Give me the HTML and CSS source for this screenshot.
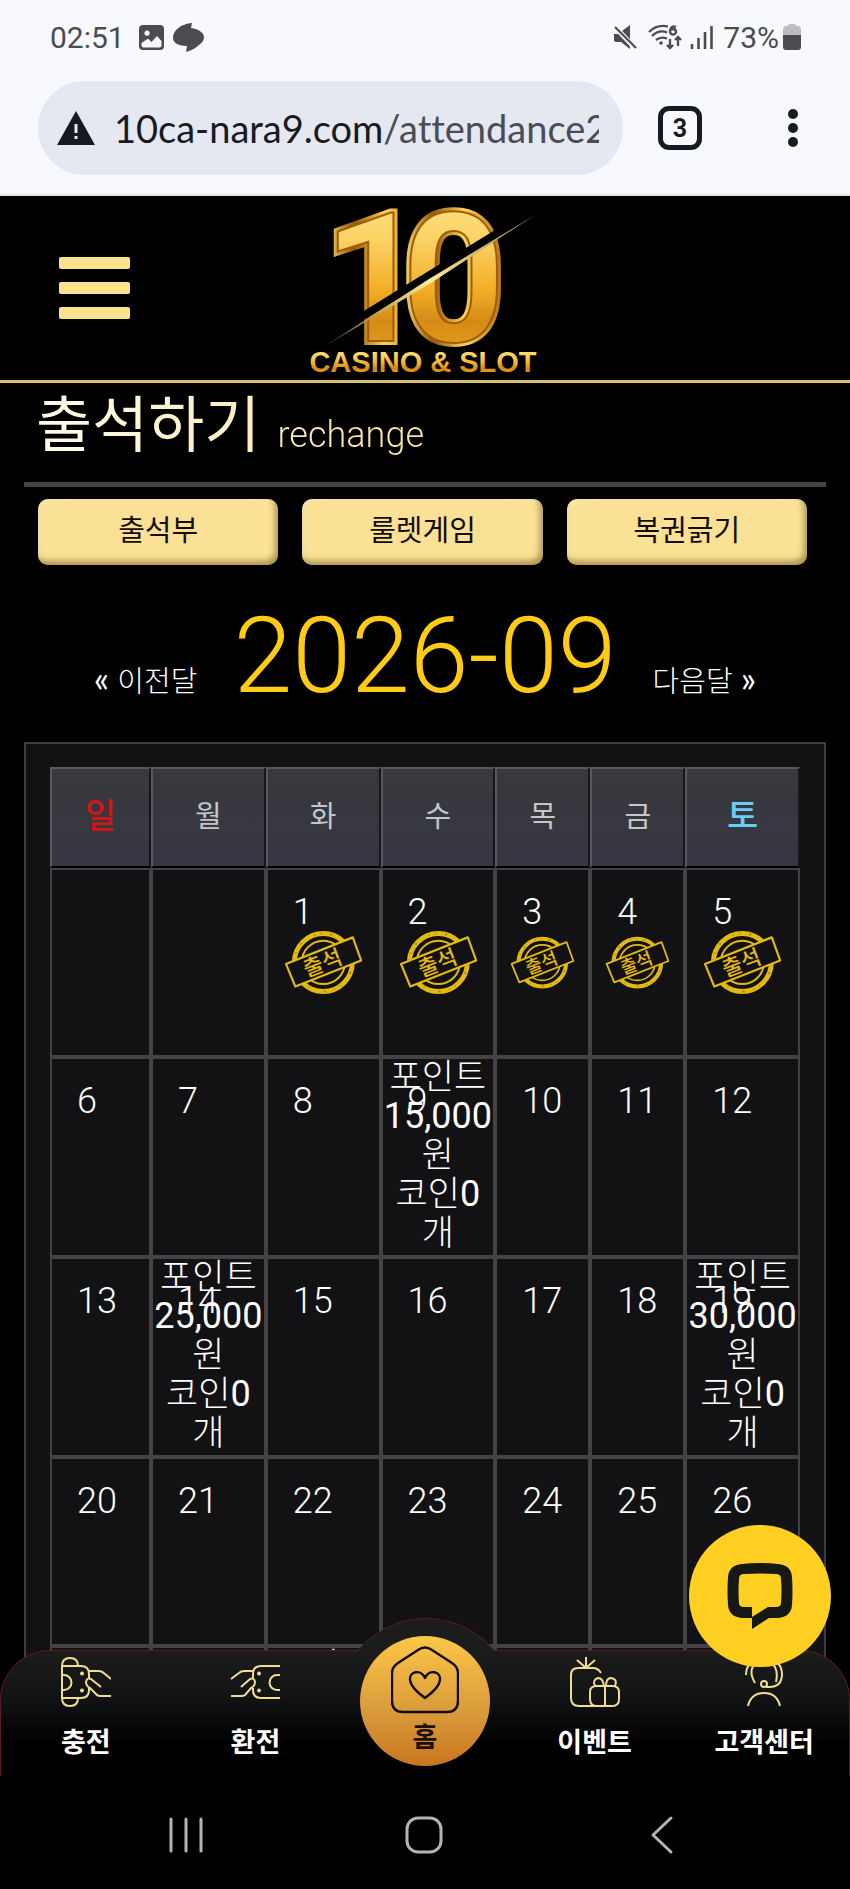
FILE: index.html
```html
<!DOCTYPE html>
<html lang="ko">
<head>
  <meta charset="UTF-8">
  <meta name="viewport" content="width=device-width, initial-scale=1.0">
  <title>출석하기</title>
  <link rel="stylesheet" href="styles.css">
</head>
<body>
  <!-- Icons used more than once -->
  <svg class="defs" width="0" height="0" aria-hidden="true">
    <symbol id="stamp" viewBox="0 0 80 66">
      <g fill="none" stroke="#e3ba12">
        <circle cx="40" cy="33" r="29.5" stroke-width="5"/>
        <circle cx="40" cy="33" r="29.5" stroke-width="2" stroke="#a58610" stroke-dasharray="1 9 2 15 1 6"/>
        <circle cx="40" cy="33" r="22" stroke-width="2"/>
        <path d="M2 34.500 70 7.500 78.500 31 11.500 57.500Z" fill="#121113" stroke-width="2.200" stroke-linejoin="round"/>
      </g>
      <text x="39" y="41" transform="rotate(-21 40 33)" text-anchor="middle">출석</text>
    </symbol>
  </svg>

  <div class="screen">
    <!-- Phone status bar -->
    <div class="status-bar">
      <span>02:51</span>
      <svg class="status-photo" width="25" height="25" viewBox="0 0 25 25"><path fill="#4b4c50" fill-rule="evenodd" d="M4 0h17a4 4 0 0 1 4 4v17a4 4 0 0 1-4 4H4a4 4 0 0 1-4-4V4a4 4 0 0 1 4-4ZM2.500 18v2.500a2 2 0 0 0 2 2h16a2 2 0 0 0 2-2V16l-4-4.500h-1l-5 5.500-3-3h-1ZM8 5.500a2.700 2.700 0 1 0 .1 0Z"/></svg>
      <svg class="status-app" width="32" height="29" viewBox="0 0 32 29"><path fill="#4b4c50" d="M19 0 18 5C26 6 31 10 31 14c0 3-2 6-5 8-3 3-7 5-13 7l1-6C6 23 0 20 0 15 0 7 8 1 19 0Z"/></svg>
      <div class="status-right">
        <svg width="24" height="24" viewBox="0 0 24 24"><path fill="#4b4c50" d="M1 9h4l12-9v17.500L17 24 8 17H3a2 2 0 0 1-2-2Z"/><path d="M1 1 22 23" stroke="#f8f9fe" stroke-width="5"/><path d="M2 2 23 23" stroke="#4b4c50" stroke-width="2.200"/></svg>
        <svg class="wifi" width="36" height="27" viewBox="0 0 36 27"><g fill="none" stroke="#4b4c50" stroke-width="2.300"><path d="M1 8Q9 0 20 2.500M4 12Q11 5 19 8.500M8 16Q13 12 19 14.500M28 3Q23 1 22 7a3 3 0 1 0 6 1q0-3-3-3-2 0-3 2M22 15v9m-3-3 3 3 3-3M30 22v-9m-3 3 3-3 3 3"/></g><circle cx="13" cy="19" r="1.800" fill="#4b4c50"/></svg>
        <svg width="23" height="24" viewBox="0 0 23 24"><path stroke="#4b4c50" stroke-width="2.600" d="M2 24v-5M8.500 24V13M15 24V7M21.500 24V1"/></svg>
        <span>73%</span>
        <svg class="battery" width="18" height="26" viewBox="0 0 18 26"><path fill="#bdbec2" d="M5 2q0-2 2-2h4q2 0 2 2h2q3 0 3 3v7H0V5q0-3 3-3Z"/><path fill="#4b4c50" d="M0 11h18v12q0 3-3 3H3q-3 0-3-3Z"/></svg>
      </div>
    </div>

    <!-- Browser address bar -->
    <div class="browser-bar">
      <div class="address">
        <svg width="40" height="34" viewBox="0 0 40 34"><path fill="#171a21" d="M20 0 39 34H1Z"/><path d="M20 13v9M20 25v3" stroke="#e6e8f0" stroke-width="3"/></svg>
        <span class="url">10ca-nara9.com<em>/attendance2</em></span>
      </div>
      <button class="tabs" aria-label="탭">3</button>
      <button class="more" aria-label="메뉴"><svg width="10" height="40" viewBox="0 0 10 40"><g fill="#171a21"><circle cx="5" cy="6" r="5"/><circle cx="5" cy="20" r="5"/><circle cx="5" cy="34" r="5"/></g></svg></button>
    </div>

    <div class="page">
      <header>
        <button class="hamburger" aria-label="전체 메뉴"><span></span><span></span><span></span></button>
        <a href="#" class="logo" aria-label="10 CASINO &amp; SLOT">
          <svg width="236" height="176" viewBox="0 0 236 176">
            <defs>
              <linearGradient id="gold" x1="0" y1="0" x2="0" y2="1">
                <stop offset="0" stop-color="#ffe88d"/>
                <stop offset=".3" stop-color="#fbd467"/>
                <stop offset=".55" stop-color="#f2ae26"/>
                <stop offset=".7" stop-color="#d58a15"/>
                <stop offset="1" stop-color="#f1b32c"/>
              </linearGradient>
              <linearGradient id="rim" x1="0" y1="0" x2="1" y2="0">
                <stop offset="0" stop-color="#ffe477"/>
                <stop offset=".3" stop-color="#9b5608"/>
                <stop offset=".6" stop-color="#ffd34e"/>
                <stop offset="1" stop-color="#b36b0a"/>
              </linearGradient>
              <linearGradient id="slash" x1="0" y1="1" x2="1" y2="0">
                <stop offset="0" stop-color="#7c5a1c"/>
                <stop offset=".5" stop-color="#ffeb9a"/>
                <stop offset="1" stop-color="#8f7540"/>
              </linearGradient>
            </defs>
            <g class="logo-number">
              <g stroke="url(#rim)" stroke-width="8"><text x="16" y="141">1</text><text x="95" y="141">0</text></g>
              <g stroke="#9e5d0c" stroke-width="2" fill="url(#gold)"><text x="16" y="141">1</text><text x="95" y="141">0</text></g>
            </g>
            <path d="M18 144 226 16 214 14 26 130Z" fill="#000"/>
            <path d="M18 146 122 79 228 15 124 83Z" fill="url(#slash)"/>
            <text class="logo-name" x="116" y="172" text-anchor="middle" fill="url(#gold)">CASINO &amp; SLOT</text>
          </svg>
        </a>
      </header>

      <main>
        <h1><span>출석하기 <small>rechange</small></span></h1>

        <div class="menu-buttons">
          <button>출석부</button>
          <button>룰렛게임</button>
          <button>복권긁기</button>
        </div>

        <div class="month">
          <a href="#"><b>«</b> 이전달</a>
          <h2>2026-09</h2>
          <a href="#">다음달 <b>»</b></a>
        </div>

        <div class="calendar">
          <table>
            <colgroup>
              <col class="sun"><col class="wide"><col class="wide"><col class="wide"><col class="narrow"><col class="narrow"><col class="wide">
            </colgroup>
            <thead>
              <tr><th class="red">일</th><th>월</th><th>화</th><th>수</th><th>목</th><th>금</th><th class="blue">토</th></tr>
            </thead>
            <tbody>
              <tr class="short">
                <td></td>
                <td></td>
                <td><span class="day">1</span><svg class="stamp" viewBox="0 0 80 66"><use href="#stamp"/></svg></td>
                <td><span class="day">2</span><svg class="stamp" viewBox="0 0 80 66"><use href="#stamp"/></svg></td>
                <td><span class="day">3</span><svg class="stamp" viewBox="0 0 80 66"><use href="#stamp"/></svg></td>
                <td><span class="day">4</span><svg class="stamp" viewBox="0 0 80 66"><use href="#stamp"/></svg></td>
                <td><span class="day">5</span><svg class="stamp" viewBox="0 0 80 66"><use href="#stamp"/></svg></td>
              </tr>
              <tr>
                <td><span class="day">6</span></td>
                <td><span class="day">7</span></td>
                <td><span class="day">8</span></td>
                <td class="reward"><span class="day">9</span><p>포인트<br><b>15,000</b><br>원<br>코인<b>0</b><br>개</p></td>
                <td><span class="day">10</span></td>
                <td><span class="day">11</span></td>
                <td><span class="day">12</span></td>
              </tr>
              <tr>
                <td><span class="day">13</span></td>
                <td class="reward"><span class="day">14</span><p>포인트<br><b>25,000</b><br>원<br>코인<b>0</b><br>개</p></td>
                <td><span class="day">15</span></td>
                <td><span class="day">16</span></td>
                <td><span class="day">17</span></td>
                <td><span class="day">18</span></td>
                <td class="reward"><span class="day">19</span><p>포인트<br><b>30,000</b><br>원<br>코인<b>0</b><br>개</p></td>
              </tr>
              <tr class="short">
                <td><span class="day">20</span></td>
                <td><span class="day">21</span></td>
                <td><span class="day">22</span></td>
                <td><span class="day">23</span></td>
                <td><span class="day">24</span></td>
                <td><span class="day">25</span></td>
                <td><span class="day">26</span></td>
              </tr>
              <tr>
                <td></td>
                <td></td>
                <td class="reward"><p>포인트</p></td>
                <td></td>
                <td></td>
                <td></td>
                <td></td>
              </tr>
            </tbody>
          </table>
        </div>
      </main>

      <!-- Bottom menu -->
      <nav class="bottom-nav">
        <div class="bump"></div>
        <a href="#">
          <svg width="50" height="50" viewBox="0 0 50 50"><g fill="none" stroke="#f2dc93" stroke-width="2"><path d="M1 9v33M1 9q0-8 8-8t8 8M1 41q0 8 8 8t8-8M1 9h19q8 0 8 8v4M28 31v2q0 8-8 8H1M1 18h2a7.500 7.500 0 0 1 0 15H1M28 14h10q3 0 6 3l6 5M40 30 30 22q-4-2-5 3 0 4 4 6l7 7q1 1 4 1h10"/></g><g fill="#f2dc93"><circle cx="21" cy="16.500" r="2"/><circle cx="21" cy="33.500" r="2"/></g></svg>
          <span>충전</span>
        </a>
        <a href="#">
          <svg width="50" height="50" viewBox="0 0 50 50"><g fill="none" stroke="#f2dc93" stroke-width="2"><path d="M50 9H31q-8 0-8 8v4M23 31v2q0 8 8 8h19M50 18h-3a7.500 7.500 0 0 0 0 15h3M23 14H14q-3 0-5 2L1 22M11 30l9-8q4-2 5 3 0 4-4 6l-6 7q-1 1-4 1H1"/></g><g fill="#f2dc93"><circle cx="29" cy="16.500" r="2"/><circle cx="29" cy="33.500" r="2"/></g></svg>
          <span>환전</span>
        </a>
        <a href="#" class="home">
          <svg width="68" height="68" viewBox="0 0 68 68"><g fill="none" stroke="#120b04" stroke-width="2.400" stroke-linejoin="round"><path d="M27 4q7-5 14 0l20 13q6 4 6 10v28q0 11-11 11H12Q1 66 1 55V27q0-6 6-10ZM34 52Q20 42 19 34c-1-9 11-11 15-2 4-9 16-7 15 2q-1 8-15 18Z"/></g></svg>
          <span>홈</span>
        </a>
        <a href="#">
          <svg width="50" height="50" viewBox="0 0 50 50"><g fill="none" stroke="#f2dc93" stroke-width="2"><path d="M16 0v11M7 3l9 8 9-8M31 16q-3-5-8-5H8q-7 0-7 7v23q0 8 8 8h32M27 29h15q7 0 7 6v7q0 7-7 7H27q-7 0-7-7v-7q0-6 7-6ZM35 29v20M34 29q-1-8-6-8-6 2-3 8M36 29q0-8 5-8 7 1 4 8"/></g></svg>
          <span>이벤트</span>
        </a>
        <a href="#">
          <svg width="50" height="50" viewBox="0 0 50 50"><g fill="none" stroke="#f2dc93" stroke-width="2"><path d="M7 18Q7 3 25 1q18 2 18 16 0 13-13 13H27M16 26Q8 12 18 6q7-5 14 0 8 5 5 19M9 49Q12 36 25 36t16 13"/><circle cx="25" cy="27" r="3"/></g></svg>
          <span>고객센터</span>
        </a>
      </nav>

      <button class="chat" aria-label="채팅 상담">
        <svg width="68" height="68" viewBox="0 0 68 68"><path fill="#171714" fill-rule="evenodd" d="M16 2Q34 0 52 2 65 3 66 15q1 14 0 28-1 12-14 13h-9L26 67V56H16Q3 55 2 43 1 29 2 15 3 3 16 2ZM18 12q-5 0-5 5-1 12 0 24 0 4 5 4h8v10l16-10h8q5 0 5-4 1-12 0-24 0-5-5-5-16-1-32 0Z"/></svg>
      </button>
    </div>

    <!-- Android navigation keys -->
    <div class="system-nav">
      <button aria-label="최근 앱"><svg width="40" height="40" viewBox="0 0 40 40"><path d="M5 4v32M20 4v32M35 4v32"/></svg></button>
      <button aria-label="홈"><svg width="40" height="40" viewBox="0 0 40 40"><rect x="3" y="3" width="34" height="34" rx="11"/></svg></button>
      <button aria-label="뒤로"><svg width="40" height="40" viewBox="0 0 40 40"><path d="M29 3 11 20 29 37"/></svg></button>
    </div>
  </div>
</body>
</html>
```
FILE: styles.css
```css
* {
  box-sizing: border-box;
}
body {
  margin: 0;
  background-color: #000;
  color: #fff;
  font-family: "Noto Sans CJK KR", sans-serif;
  font-weight: 300;
}
a {
  color: inherit;
  text-decoration: none;
}
button {
  border: none;
  padding: 0;
  background: none;
  font-family: inherit;
  cursor: pointer;
}
svg {
  display: block;
}
.defs {
  position: absolute;
}
.screen {
  display: flex;
  flex-direction: column;
  height: 100vh;
}

/* phone and browser bars */
.status-bar {
  display: flex;
  align-items: center;
  height: 76px;
  padding: 0 49px 2px 50px;
  background-color: #f8f9fe;
  color: #4b4c50;
  font-family: Roboto, sans-serif;
  font-size: 30px;
  font-weight: 400;
}
.status-photo {
  margin-left: 14px;
}
.status-app {
  margin-left: 9px;
}
.status-right {
  display: flex;
  align-items: center;
  margin-left: auto;
}
.status-right .wifi {
  margin: 0 6px 0 11px;
}
.status-right span {
  margin-left: 10px;
}
.status-right .battery {
  margin-left: 4px;
}
.browser-bar {
  display: flex;
  align-items: center;
  height: 120px;
  padding: 0 52px 14px 38px;
  border-bottom: 2px solid #e3e5ea;
  background-color: #f8f9fe;
}
.address {
  display: flex;
  align-items: center;
  flex: 1;
  min-width: 0;
  height: 94px;
  padding: 0 24px 0 18px;
  border-radius: 47px;
  background-color: #e5e8f0;
}
.address svg {
  flex: none;
}
.url {
  flex: 1;
  margin-left: 18px;
  overflow: hidden;
  white-space: nowrap;
  color: #171a21;
  font-family: Lato, sans-serif;
  font-size: 38px;
  font-weight: 400;
  font-variant-ligatures: none;
}
.url em {
  color: #4a4d57;
  font-style: normal;
}
.tabs {
  width: 44px;
  height: 44px;
  margin: 0 86px 0 35px;
  border: 5px solid #171a21;
  border-radius: 11px;
  color: #171a21;
  font-family: Roboto, sans-serif;
  font-size: 25px;
  font-weight: 700;
}

/* site */
.page {
  position: relative;
  flex: 1;
  min-height: 0;
  overflow: hidden;
}
header {
  display: grid;
  grid-template-columns: 1fr auto 1fr;
  align-items: center;
  height: 187px;
  padding: 0 59px;
  border-bottom: 3px solid #d9bd75;
}
.hamburger {
  display: flex;
  flex-direction: column;
  gap: 13px;
  width: 71px;
}
.hamburger span {
  height: 12px;
  border-radius: 2px;
  background-color: #fce28c;
}
.logo-number {
  font-family: Roboto, sans-serif;
  font-size: 180px;
  font-weight: 700;
}
.logo-name {
  font-family: "Liberation Sans", sans-serif;
  font-size: 29px;
  font-weight: 700;
}
main {
  padding: 0 24px;
}
h1 {
  display: flex;
  height: 104px;
  margin: 0;
  padding-left: 12px;
  border-bottom: 5px solid #444245;
  font-size: 61px;
  font-weight: 400;
  line-height: 76px;
}
h1 span {
  background: linear-gradient(to right, #fffbe8, #fbe2a0);
  -webkit-background-clip: text;
  background-clip: text;
  color: transparent;
}
h1 small {
  font-family: Roboto, sans-serif;
  font-size: 36px;
  font-weight: 300;
}
.menu-buttons {
  display: grid;
  grid-template-columns: repeat(3, 1fr);
  gap: 24px;
  padding: 12px 19px 0 14px;
}
.menu-buttons button {
  height: 66px;
  padding-bottom: 8px;
  border-radius: 10px;
  background-color: #fae195;
  box-shadow: inset -3px -4px 6px rgba(90, 70, 10, 0.5), inset 2px 2px 4px rgba(255, 255, 255, 0.3);
  color: #120d05;
  font-size: 29px;
  font-weight: 400;
}
.month {
  display: flex;
  justify-content: center;
  align-items: baseline;
  gap: 36px;
  height: 177px;
  padding-top: 31px;
}
.month a {
  font-size: 29px;
}
.month b {
  font-family: Lato, sans-serif;
  font-size: 36px;
  font-weight: 400;
}
h2 {
  margin: 0;
  color: #ffcb14;
  font-family: Roboto, sans-serif;
  font-size: 106px;
  font-weight: 300;
  line-height: 120px;
}
.calendar {
  padding: 23px 24px;
  border: 2px solid #3f3d40;
  background-color: #121113;
}
table {
  width: 100%;
  table-layout: fixed;
  border-spacing: 0;
}
.sun {
  width: 101px;
}
.narrow {
  width: 95px;
}
th {
  height: 101px;
  padding: 0 0 8px;
  border: 2px solid;
  border-color: #5a5a5e #17171b #000 #5a5a5e;
  background: linear-gradient(#38393c, #363743);
  color: #c6c6c9;
  font-size: 29px;
  font-weight: 400;
}
th.red {
  color: #d51414;
  font-size: 34px;
  font-weight: 500;
}
th.blue {
  color: #68cdf7;
  font-size: 34px;
  font-weight: 500;
}
td {
  position: relative;
  height: 200px;
  padding: 0;
  border: 2px solid #444245;
  font-size: 35px;
  line-height: 39px;
  text-align: center;
}
.short td {
  height: 189px;
}
/* day number sits over the reward text */
.day {
  position: absolute;
  top: 23px;
  left: 25px;
  font-family: Roboto, sans-serif;
  font-size: 36px;
}
.reward {
  vertical-align: top;
}
.reward p {
  margin: -5px 0 0;
}
td b {
  font-family: Roboto, sans-serif;
  font-size: 36px;
  font-weight: 400;
  line-height: 0;
}
.stamp {
  width: 71%;
  margin: 0 auto;
}
#stamp text {
  fill: #e3ba12;
  font-size: 22px;
  font-weight: 500;
}

/* bottom menu */
.bottom-nav {
  position: absolute;
  right: 0;
  bottom: 0;
  left: 0;
  display: grid;
  grid-template-columns: repeat(5, 1fr);
  height: 126px;
  border: 1px solid #5c1a24;
  border-bottom: none;
  border-radius: 50px 50px 0 0;
  background: linear-gradient(#1b1d1b, #111213 40%, #000 75%);
}
.bottom-nav a {
  position: relative;
  display: flex;
  flex-direction: column;
  align-items: center;
  gap: 14px;
  padding-top: 6px;
  font-size: 27px;
  font-weight: 700;
  line-height: 40px;
  white-space: nowrap;
}
.bump {
  position: absolute;
  top: -33px;
  left: 50%;
  width: 142px;
  height: 34px;
  margin-left: -71px;
  overflow: hidden;
}
.bump::before {
  content: "";
  position: absolute;
  top: 0;
  left: -17px;
  width: 176px;
  height: 176px;
  border: 1px solid #5c1a24;
  border-radius: 50%;
  background-color: #1b1d1b;
}
.bottom-nav .home {
  justify-self: center;
  gap: 2px;
  width: 130px;
  height: 130px;
  margin-top: -15px;
  padding-top: 10px;
  border-radius: 50%;
  background: linear-gradient(#fcc748, #d9993a 60%, #c8761f);
  color: #1d1006;
}
.chat {
  position: absolute;
  right: 19px;
  bottom: 109px;
  display: flex;
  justify-content: center;
  align-items: center;
  width: 142px;
  height: 142px;
  border-radius: 50%;
  background-color: #ffd021;
}
.system-nav {
  display: grid;
  grid-template-columns: repeat(3, 1fr);
  justify-items: center;
  height: 113px;
  padding: 4px 69px 0 67px;
}
.system-nav svg {
  fill: none;
  stroke: #b5b3b7;
  stroke-width: 3;
  stroke-linecap: round;
  stroke-linejoin: round;
}
```
